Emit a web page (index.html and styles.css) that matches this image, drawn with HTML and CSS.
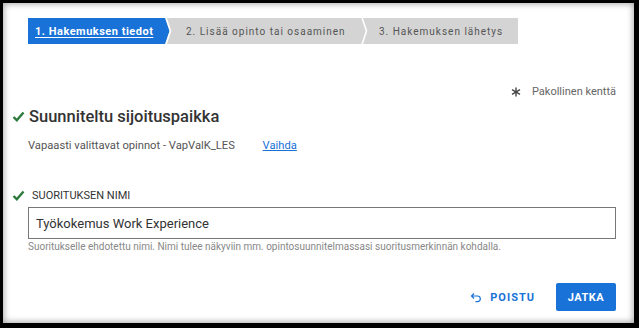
FILE: index.html
```html
<!DOCTYPE html>
<html lang="fi">
<head>
  <meta charset="UTF-8">
  <title>Hakemuksen tiedot</title>
  <link rel="stylesheet" href="styles.css">
</head>
<body>
  <div class="window">
    <!-- Stepper -->
    <nav class="stepper">
      <div class="step step-active"><span class="step-link">1. Hakemuksen tiedot</span></div>
      <svg class="sep" width="8" height="26" viewBox="0 0 8 26">
        <rect width="8" height="26" fill="#d4d4d4"/>
        <polygon points="0,0 4.5,13 0,26" fill="#1872d8"/>
        <polyline points="0.8,-1 5.5,13 0.8,27" fill="none" stroke="#fff" stroke-width="1.6"/>
      </svg>
      <div class="step step-next step-two">2. Lisää opinto tai osaaminen</div>
      <svg class="sep" width="8" height="26" viewBox="0 0 8 26">
        <rect width="8" height="26" fill="#d4d4d4"/>
        <polyline points="0.8,-1 5.5,13 0.8,27" fill="none" stroke="#fff" stroke-width="1.6"/>
      </svg>
      <div class="step step-next step-three">3. Hakemuksen lähetys</div>
    </nav>

    <div class="required-note">
      <svg class="star" width="10" height="10" viewBox="0 0 10 10">
        <g stroke="#444" stroke-width="1.4">
          <line x1="5" y1="0.5" x2="5" y2="9.5"/>
          <line x1="1" y1="2.7" x2="9" y2="7.3"/>
          <line x1="1" y1="7.3" x2="9" y2="2.7"/>
        </g>
      </svg>
      <span>Pakollinen kenttä</span>
    </div>

    <section class="section">
      <h2 class="section-title">
        <svg class="check" width="13" height="11" viewBox="0 0 13 11">
          <path d="M1.5 6 L4.8 9.2 L11.5 1.5" fill="none" stroke="#2c7a3c" stroke-width="2.4"/>
        </svg>
        Suunniteltu sijoituspaikka
      </h2>
      <p class="placement">
        <span>Vapaasti valittavat opinnot - VapValK_LES</span>
        <a href="#" class="change-link">Vaihda</a>
      </p>
    </section>

    <section class="field">
      <label class="field-label" for="name">
        <svg class="check" width="13" height="11" viewBox="0 0 13 11">
          <path d="M1.5 6 L4.8 9.2 L11.5 1.5" fill="none" stroke="#2c7a3c" stroke-width="2.4"/>
        </svg>
        SUORITUKSEN NIMI
      </label>
      <input id="name" class="text-input" type="text" value="Työkokemus Work Experience">
      <p class="help">Suoritukselle ehdotettu nimi. Nimi tulee näkyviin mm. opintosuunnitelmassasi suoritusmerkinnän kohdalla.</p>
    </section>

    <div class="actions">
      <button class="btn-link">
        <svg width="12" height="12" viewBox="0 0 12 12">
          <path d="M4 2.5 L1.5 5 L4 7.5 M1.5 5 H7.5 a2.8 2.8 0 0 1 0 5.6 H5.5" fill="none" stroke="#1872d8" stroke-width="1.2"/>
        </svg>
        POISTU
      </button>
      <button class="btn-primary">JATKA</button>
    </div>
  </div>
</body>
</html>
```

FILE: styles.css
```css
* {
  box-sizing: border-box;
  margin: 0;
  padding: 0;
}
html, body {
  width: 639px;
  height: 328px;
  overflow: hidden;
}
body {
  background: #000;
  font-family: Roboto, 'Noto Sans', sans-serif;
  color: #333;
}
.window {
  margin: 3px 5px 0 3px;
  height: 320px;
  background: #fff;
  box-shadow: inset 0 0 6px 1px rgba(0,0,0,0.35);
  padding: 15px 18px 0 25px;
}
/* Stepper */
.stepper {
  display: flex;
  height: 26px;
}
.step {
  display: flex;
  align-items: center;
  height: 26px;
  font-size: 10px;
  letter-spacing: 1px;
  white-space: nowrap;
  flex: none;
}
.step-active {
  background: #1872d8;
  color: #fff;
  font-weight: 700;
  font-size: 11px;
  letter-spacing: 0.5px;
  padding: 0 0 0 7px;
  width: 137px;
}
.step-link {
  text-decoration: underline;
  text-underline-offset: 2px;
}
.step-next {
  background: #d4d4d4;
  color: #555;
}
.step-two {
  width: 188px;
  padding-left: 13px;
}
.step-three {
  width: 149px;
  padding-left: 10px;
}
.sep {
  display: block;
  flex: none;
}
/* Required note */
.required-note {
  display: flex;
  justify-content: flex-end;
  align-items: center;
  gap: 11px;
  margin-top: 41px;
  font-size: 11px;
  color: #666;
}
.star {
  display: block;
}
/* Placement section */
.section-title {
  display: flex;
  align-items: center;
  font-size: 16.5px;
  font-weight: 500;
  color: #333;
  margin: 9px 0 0 -16px;
}
.check {
  display: block;
  margin-right: 4px;
}
.placement {
  margin-top: 13px;
  font-size: 11.2px;
  color: #555;
}
.change-link {
  margin-left: 25px;
  color: #1872d8;
}
/* Field */
.field {
  margin-top: 37px;
}
.field-label {
  display: flex;
  align-items: center;
  margin-left: -16px;
  font-size: 11px;
  color: #333;
}
.field-label .check {
  margin-right: 7px;
}
.text-input {
  display: block;
  width: 100%;
  height: 32px;
  margin-top: 5px;
  border: 1px solid #777;
  padding: 0 7px;
  font-family: Roboto, 'Noto Sans', sans-serif;
  font-size: 13px;
  color: #333;
}
.help {
  margin-top: 2px;
  font-size: 10px;
  color: #888;
}
/* Actions */
.actions {
  display: flex;
  justify-content: flex-end;
  align-items: center;
  gap: 21px;
  margin-top: 31px;
}
.btn-link {
  display: flex;
  align-items: center;
  gap: 8px;
  background: none;
  border: none;
  color: #1872d8;
  font-family: Roboto, 'Noto Sans', sans-serif;
  font-weight: 700;
  font-size: 11px;
  letter-spacing: 1px;
}
.btn-primary {
  width: 60px;
  height: 28px;
  background: #1872d8;
  border: none;
  border-radius: 2px;
  color: #fff;
  font-family: Roboto, 'Noto Sans', sans-serif;
  font-weight: 700;
  font-size: 11px;
  letter-spacing: 0.5px;
}
```
